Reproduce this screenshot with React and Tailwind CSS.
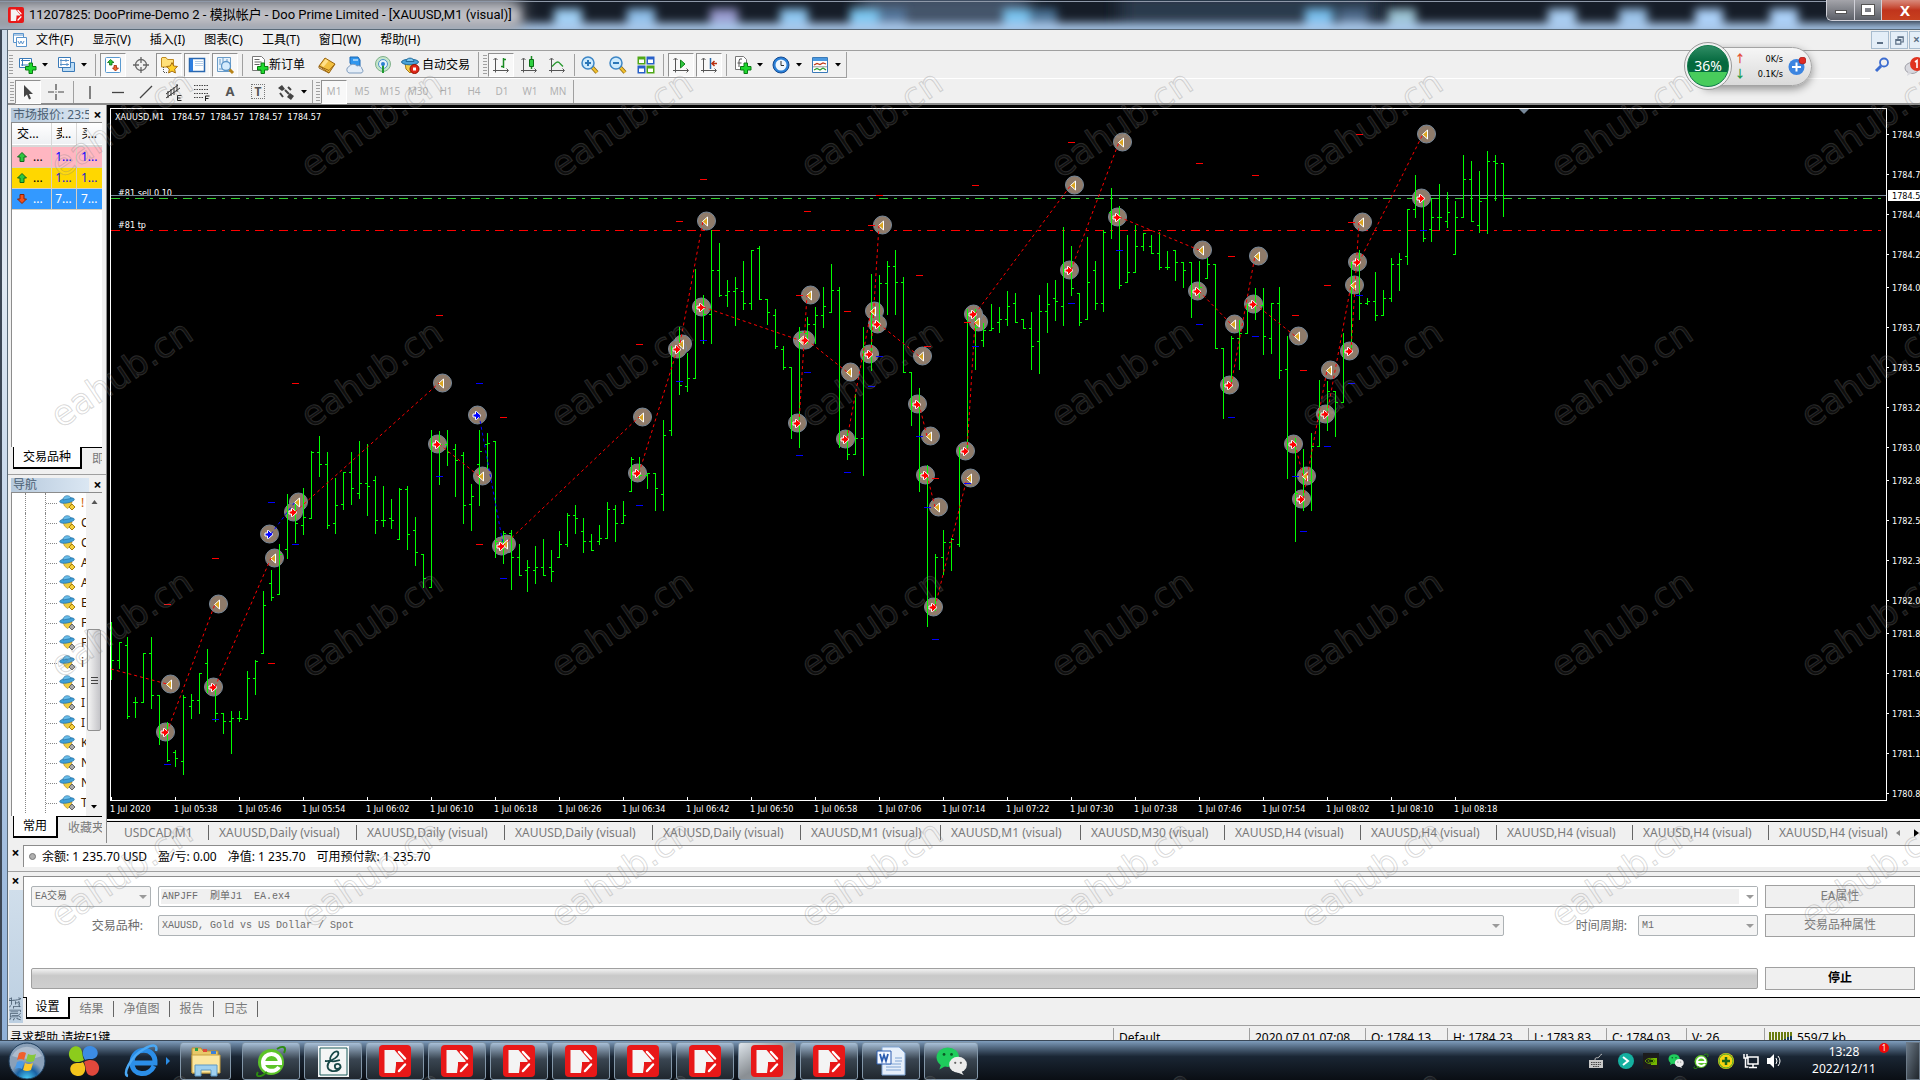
import clsx from "clsx";

/* ---------- chart data: [high, low, open, close] in plot pixels, one bar every 8px ---------- */
const BARS = [
    [622,679,660,660],[642,668,660,642],[637,718,645,716],[697,717,702,702],[653,702,702,653],[637,708,653,695],[695,744,695,733],[722,761,733,760],
    [750,766,752,758],[695,774,761,697],[694,718,706,700],[673,713,700,673],[649,692,663,687],[687,721,687,713],[713,733,713,721],[711,753,721,718],
    [711,721,718,718],[671,718,719,678],[660,694,678,661],[591,653,653,605],[570,600,583,597],[544,594,594,554],[494,558,549,512],[503,542,512,523],
    [488,534,525,517],[451,518,518,452],[436,476,452,464],[452,528,464,525],[478,533,523,505],[472,509,504,472],[452,504,472,488],[441,498,493,483],
    [444,515,483,486],[476,533,480,520],[486,526,520,520],[499,528,518,520],[488,539,539,489],[486,549,489,534],[517,565,530,552],[554,587,554,578],
    [430,587,587,443],[431,484,443,444],[430,465,444,452],[444,496,449,460],[452,523,455,505],[484,530,504,496],[430,505,464,451],[433,468,444,443],
    [441,557,441,541],[531,563,541,533],[530,589,533,557],[544,575,557,575],[560,591,570,567],[546,583,570,567],[539,575,567,575],[550,581,567,571],
    [531,557,557,544],[513,546,544,515],[505,533,515,518],[518,552,531,541],[534,550,541,550],[525,544,541,538],[502,538,538,509],[505,541,509,523],
    [501,523,523,515],[457,491,491,459],[457,478,475,475],[473,488,475,473],[473,510,473,488],[420,510,494,435],[346,435,430,348],[327,394,348,385],
    [353,391,386,378],[269,378,378,307],[295,343,307,314],[230,343,314,270],[243,296,270,295],[280,306,295,291],[277,325,291,288],[261,309,291,303],
    [250,309,303,250],[246,299,248,299],[299,324,299,312],[309,348,315,346],[346,369,349,367],[367,438,367,423],[327,447,423,332],[317,343,333,324],
    [307,343,324,315],[287,327,315,306],[264,312,312,290],[287,447,290,439],[430,459,439,454],[394,454,454,438],[327,475,438,354],[274,370,354,324],
    [275,330,324,283],[261,314,283,266],[250,314,266,282],[277,372,282,372],[372,425,372,404],[388,491,404,473],[465,626,475,607],[554,610,607,557],
    [530,574,557,542],[538,570,542,539],[447,546,544,450],[309,452,451,314],[309,369,314,327],[323,346,340,330],[304,330,330,328],[307,332,322,319],
    [291,325,319,306],[293,322,303,322],[319,328,319,328],[312,369,328,346],[295,373,341,311],[283,332,311,304],[280,320,298,301],[227,325,306,270],
    [246,295,270,288],[293,325,293,322],[237,319,319,282],[261,309,270,303],[230,311,303,232],[188,238,212,217],[206,288,217,285],[235,282,282,272],
    [225,272,272,246],[233,250,246,233],[235,253,246,253],[232,269,253,267],[251,269,267,267],[250,280,250,262],[262,287,262,270],[262,317,262,290],
    [261,297,291,287],[258,278,278,264],[264,348,264,348],[348,418,348,385],[336,387,385,338],[320,369,338,333],[304,333,333,304],[288,319,304,305],
    [288,354,305,336],[303,353,338,303],[287,378,303,370],[336,478,369,443],[438,541,443,493],[449,510,498,478],[433,510,480,446],[380,446,446,413],
    [381,430,413,391],[391,436,391,402],[333,402,402,350],[262,351,350,262],[250,319,262,303],[298,304,303,301],[272,320,301,315],[290,315,315,298],
    [258,301,298,264],[253,290,264,259],[209,264,256,209],[175,217,209,197],[198,241,198,238],[198,241,229,217],[184,229,217,217],[192,227,221,212],
    [201,254,254,217],[155,217,217,179],[161,221,179,221],[171,232,225,201],[151,233,198,161],[155,200,161,163],[163,216,163,195],
];

const SELLS = [
    [165,732],[213,687],[293,512],[437,444],[501,546],[637,473],[677,349],[701,307],[805,340],[797,423],[845,439],[869,354],[877,324],[917,404],
    [925,475],[933,607],[965,451],[973,314],[1069,270],[1117,217],[1197,291],[1253,304],[1229,385],[1293,444],[1301,499],[1325,414],[1349,351],
    [1357,262],[1421,198],
];
const BUYS = [[269,534],[477,415]];
const EXITS = [
    [170,684],[218,604],[274,558],[298,502],[442,383],[482,476],[506,544],[642,417],[682,344],[706,221],[810,295],[802,340],[850,372],[874,311],
    [882,225],[922,356],[930,436],[938,507],[970,478],[978,322],[1074,185],[1122,142],[1202,250],[1258,256],[1234,324],[1298,336],[1306,476],
    [1330,370],[1354,285],[1362,222],[1426,134],
];
const SELL_LINES = [
    [111,669,167,684],[167,732,215,604],[215,687,271,558],[295,512,439,383],[439,444,479,476],[503,546,639,417],[639,473,679,344],
    [679,349,703,221],[703,307,799,340],[799,423,807,295],[807,340,847,372],[847,439,871,311],[871,354,879,225],[879,324,919,356],[919,404,927,436],
    [927,475,935,507],[935,607,967,478],[967,451,975,322],[975,314,1071,185],[1071,270,1119,142],[1119,217,1199,250],[1199,291,1231,324],
    [1231,385,1255,256],[1255,304,1295,336],[1295,444,1303,476],[1303,499,1327,370],[1327,414,1351,285],[1351,351,1359,222],[1359,262,1423,134],
];
const BUY_LINES = [[271,534,295,502],[479,415,503,544]];
const STOPS = [
    [215,558],[167,604],[271,663],[295,383],[439,315],[503,417],[479,544],[639,344],[679,221],[703,179],[799,295],[807,211],[847,311],[871,225],
    [879,195],[919,275],[927,346],[935,478],[967,322],[975,185],[1071,142],[1199,163],[1255,175],[1231,256],[1295,315],[1303,370],[1327,285],
    [1351,222],[1359,134],
];
const TAKES = [
    [167,764],[215,719],[271,502],[295,544],[479,383],[439,476],[503,578],[639,505],[679,381],[703,340],[799,455],[807,372],[847,472],[871,386],
    [879,356],[919,436],[927,507],[935,639],[967,483],[975,346],[1071,303],[1119,250],[1199,324],[1255,336],[1231,417],[1295,476],[1303,531],
    [1327,446],[1351,383],[1359,295],[1423,230],
];
const PRICES = [
    [134,"1784.9"],[174,"1784.7"],[214,"1784.4"],[254,"1784.2"],[287,"1784.0"],[327,"1783.7"],[367,"1783.5"],[407,"1783.2"],[447,"1783.0"],
    [480,"1782.8"],[520,"1782.5"],[560,"1782.3"],[600,"1782.0"],[633,"1781.8"],[673,"1781.6"],[713,"1781.3"],[753,"1781.1"],[793,"1780.8"],
];
const TIMES = [
    "2020","05:38","05:46","05:54","06:02","06:10","06:18","06:26","06:34","06:42","06:50","06:58","07:06","07:14","07:22","07:30","07:38",
    "07:46","07:54","08:02","08:10","08:18",
];

const barPath = BARS.map(([h, l, o, c], i) => {
    const x = 111.5 + i * 8;
    return `M${x} ${h}V${l + 1}M${x - 2.5} ${o + 0.5}H${x}M${x} ${c + 0.5}H${x + 2.5}`;
}).join("");
const linePath = (lines) => lines.map(([a, b, c, d]) => `M${a} ${b}L${c} ${d}`).join("");
const dashPath = (dots) => dots.map(([x, y]) => `M${x - 3} ${y + 0.5}h7`).join("");

const ARROW = "M-4-1.500h2.500v-2.500h1L4 0-.5 4h-1V1.500H-4z";

function Chart() {
    return (
        <div className="flex-1 min-h-0 bg-black flex flex-col pl-[3px] pt-[3px] border-b border-white">
            <div className="flex-1 min-h-0 flex">
                <svg className="flex-1 min-w-0 border border-white block overflow-hidden">
                    <g transform="translate(-111 -109)">
                        <path d="M1519 109h10l-5 5z" fill="#778899" />
                        <g className="font-['DejaVu_Sans_Condensed','Noto_Sans',sans-serif] text-[9px]" fill="#fff">
                            <text x="115" y="120" xmlSpace="preserve">XAUUSD,M1   1784.57  1784.57  1784.57  1784.57</text>
                            <text x="118" y="196">#81 sell 0.10</text>
                            <text x="118" y="228">#81 tp</text>
                        </g>
                        <g shapeRendering="crispEdges">
                            <path d="M111 195.500H3000" stroke="#778899" />
                            <path d="M111 198.500H3000" stroke="#32cd32" strokeDasharray="9 6 3 6" />
                            <path d="M111 230.500H3000" stroke="#f00" strokeDasharray="9 6 3 6" />
                        </g>
                        {[...EXITS, ...BUYS, ...SELLS].map(([x, y], i) => (
                            <circle key={i} cx={x + 0.5} cy={y} r="9" fill="#8f7b6a" stroke="#778899" />
                        ))}
                        <path d={barPath} stroke="#0f0" fill="none" shapeRendering="crispEdges" />
                        {EXITS.map(([x, y], i) => (
                            <path key={i} transform={`translate(${x} ${y + 0.5})`} d="M-3.500 0L1.500-4.500V4.500z" fill="#daa520" stroke="#fff" />
                        ))}
                        {SELLS.map(([x, y], i) => (
                            <path key={i} transform={`translate(${x} ${y + 0.5})`} d={ARROW} fill="#f00" stroke="#fff" />
                        ))}
                        {BUYS.map(([x, y], i) => (
                            <path key={i} transform={`translate(${x} ${y + 0.5})`} d={ARROW} fill="#00f" stroke="#fff" />
                        ))}
                        <path d={linePath(SELL_LINES)} stroke="#f00" strokeDasharray="3 3" />
                        <path d={linePath(BUY_LINES)} stroke="#00f" strokeDasharray="3 3" />
                        <path d={dashPath(STOPS)} stroke="#f00" shapeRendering="crispEdges" />
                        <path d={dashPath(TAKES)} stroke="#00f" shapeRendering="crispEdges" />
                    </g>
                    {TIMES.map((t, i) => (
                        <rect key={t} x={i * 64} y="100%" width="1" height="3" fill="#fff" transform="translate(0 -3)" />
                    ))}
                </svg>
                <svg className="w-[33px] shrink-0 block">
                    <g transform="translate(-1887 -108)" className="font-['DejaVu_Sans_Condensed','Noto_Sans',sans-serif] text-[9px]" fill="#fff">
                        {PRICES.map(([y, label]) => (
                            <g key={y}>
                                <rect x="1887" y={y} width="2" height="1" />
                                <text x="1892" y={y + 4}>{label}</text>
                            </g>
                        ))}
                        <rect x="1888" y="190" width="40" height="11" />
                        <text x="1892" y="199" fill="#000">1784.5</text>
                    </g>
                </svg>
            </div>
            <div className="h-[18px] shrink-0 flex overflow-hidden text-white text-[9px] leading-4 font-['DejaVu_Sans_Condensed','Noto_Sans',sans-serif]">
                {TIMES.map((t) => <span key={t} className="w-16 shrink-0 whitespace-nowrap">1 Jul {t}</span>)}
            </div>
        </div>
    );
}

/* ---------- toolbar ---------- */
function Svg({ children, className = "size-5", box = "0 0 20 20" }) {
    return <svg viewBox={box} className={clsx("shrink-0", className)} fill="none">{children}</svg>;
}
const Grip = () => <div className="w-1 h-5 mx-px shrink-0 bg-[repeating-linear-gradient(180deg,#a0a0a0_0_1px,#f0f0f0_1px_3px)]" />;
const Sep = ({ className = "mx-[2px]" }) => <div className={clsx("w-px h-[22px] shrink-0 bg-[#a0a0a0]", className)} />;
const Caret = () => <svg viewBox="0 0 6 4" className="w-[6px] h-1 shrink-0"><path d="M0 0h6L3 3.500z" fill="#000" /></svg>;
const Plus = () => <path d="M12 8h3.500v3.500H19V15h-3.500v3.500H12V15H8.500v-3.500H12z" fill="#1ed82e" stroke="#0a7a14" />;

function Tool({ label, on, children, className }) {
    return (
        <button aria-label={label} className={clsx("h-6 w-[26px] mr-[2px] shrink-0 flex items-center justify-center border", on ? "bg-[#f8f8f8] border-t-[#909090] border-l-[#909090] border-b-white border-r-white" : "border-transparent", className)}>
            {children}
        </button>
    );
}
function DropTool({ label, children, className = "w-[34px] mr-[5px]" }) {
    return <button aria-label={label} className={clsx("h-6 shrink-0 flex items-center justify-between pl-[3px]", className)}>{children}<Caret /></button>;
}
const Axes = ({ children }) => (
    <Svg>
        <path d="M4.500 3.500v14M2 15.500h15M2.500 5l2-2 2 2M15.500 13.500l2 2-2 2" stroke="#555" />
        {children}
    </Svg>
);
const Lens = ({ plus }) => (
    <Svg>
        <path d="M12 12l5 5.500" stroke="#8a6510" strokeWidth="4" /><path d="M12 12l5 5.500" stroke="#f0c030" strokeWidth="2.500" />
        <circle cx="8" cy="8" r="6" fill="#cdeafd" stroke="#3d86c6" strokeWidth="1.500" />
        <path d={plus ? "M8 5v6M5 8h6" : "M5 8h6"} stroke="#2b76b8" strokeWidth="2" />
    </Svg>
);

function MainToolbar() {
    return (
        <div className="flex h-7 pt-px border-b border-white">
            <div className="flex items-center border-b border-r border-[#a0a0a0]">
                <Grip />
                <DropTool label="新图表"><Svg><path d="M2.500 3.500h12v9h-12z" fill="#fff" stroke="#3a7ab8" /><path d="M4 5.500h9M5.500 4v7M4 10h7" stroke="#3a7ab8" /><Plus /></Svg></DropTool>
                <DropTool label="配置文件" className="w-[34px]"><Svg><path d="M6.500 7.500h12v9h-12z" fill="#bcdcf5" stroke="#3a7ab8" /><path d="M2.500 2.500h12v10h-12z" fill="#fff" stroke="#3a7ab8" /><path d="M4 5.500h9M5 4v7M4 9.500h9M10 4v3M11 8v3" stroke="#5a92c8" /></Svg></DropTool>
                <Sep className="ml-2 mr-1" />
                <Tool label="市场报价" on><Svg><rect x="2.500" y="2.500" width="15" height="15" rx="1" fill="#fff" stroke="#5a9ad0" /><path d="M7.500 4.500L4.500 7.500h2v2.500h2.500V7.500h2z" fill="#2fc43a" stroke="#0c7018" strokeWidth=".8" /><path d="M12.500 16l3-3h-2v-2.500H11V13H9.500z" fill="#f0672c" stroke="#a02808" strokeWidth=".8" /></Svg></Tool>
                <Tool label="数据窗口"><Svg><circle cx="10" cy="10" r="5.500" stroke="#666" strokeWidth="1.300" /><path d="M10 2v6M10 12v6M2 10h6M12 10h6" stroke="#666" strokeWidth="1.300" /></Svg></Tool>
                <Tool label="导航" on><Svg><path d="M2.500 3v9h12V4.500H8.500L7 2.500H3z" fill="#ffe07a" stroke="#c08a20" /><path d="M4.500 12v5.500h4" stroke="#555" strokeDasharray="1 1" /><path d="M13 7.500l1.700 3.500 3.800.5-2.800 2.600.7 3.900-3.400-1.900L9.600 18l.7-3.900-2.800-2.600 3.800-.5z" fill="#ffd028" stroke="#a87010" /></Svg></Tool>
                <Tool label="终端" on><Svg><path d="M2.500 3.500h15v13h-15z" fill="#fff" stroke="#2a68b0" strokeWidth="1.500" /><path d="M3 4h3v12H3z" fill="#2f7fe0" /><path d="M8 6.500h8M8 8.500h8M8 10.500h8" stroke="#b8cfe8" /></Svg></Tool>
                <Tool label="策略测试" on><Svg><path d="M2.500 2.500h13v14h-13z" fill="#e6f2fc" stroke="#6a9cc8" /><path d="M5 4v6M8 3v4M12 4v3M4 14h4" stroke="#6a9cc8" /><path d="M14 14l4 4" stroke="#b88418" strokeWidth="3" /><circle cx="11" cy="11" r="4.500" fill="#cfe9fc" fillOpacity=".8" stroke="#5a94c8" strokeWidth="1.300" /></Svg></Tool>
                <Sep />
                <button className="h-6 w-[69px] flex items-center shrink-0 text-xs whitespace-nowrap pl-1"><Svg><path d="M3.500 1.500h9l3 3v11h-12z" fill="#fff" stroke="#777" /><path d="M5.500 4.500h5M5.500 7h7M5.500 9.500h5" stroke="#666" /><Plus /></Svg>新订单</button>
                <Tool label="MetaEditor"><Svg><path d="M2 11l6-8 10 6-6 9z" fill="#f2c040" stroke="#9a6410" /><path d="M2 11l10 4.500 6-6.500M2 11v2l10 5" stroke="#9a6410" /><path d="M4 10l4.500-6 3 2-5 6z" fill="#ffe08a" /></Svg></Tool>
                <Tool label="市场"><Svg><path d="M5 2h8l2 3v6H7L5 8z" fill="#2f96ee" stroke="#1c68b4" /><path d="M8 5h5" stroke="#fff" /><path d="M4 18a3.500 3.500 0 010-6.500 5 5 0 018-.5 3.500 3.500 0 015 3 2.200 2.200 0 01-1 4z" fill="#e4edf7" stroke="#7f9cbf" /></Svg></Tool>
                <Tool label="信号"><Svg><circle cx="10" cy="9" r="7.500" fill="#c5e6cb" stroke="#7fb08a" /><circle cx="10" cy="9" r="4.500" fill="#e6f2fb" stroke="#4e90c8" /><path d="M10 9v9" stroke="#1f9a30" strokeWidth="2" /><circle cx="10" cy="9" r="2" fill="#2d7fd0" /></Svg></Tool>
                <button className="h-6 w-[75px] mr-[5px] flex items-center gap-[2px] shrink-0 text-xs whitespace-nowrap pl-[2px]"><Svg><path d="M5 8h10l-2 7-3 3-4-4z" fill="#f4cd48" stroke="#a87a18" /><ellipse cx="10" cy="7" rx="8.500" ry="2.800" fill="#4aa2d8" stroke="#1e6a9c" /><path d="M6 6.500C6 2 14 2 14 6.500z" fill="#7cc6ee" stroke="#1e6a9c" /><circle cx="14.500" cy="14" r="4.500" fill="#e02818" stroke="#901000" /><path d="M13 12.500h3v3h-3z" fill="#fff" /></Svg>自动交易</button>
            </div>
            <div className="flex items-center border-b border-r border-[#a0a0a0] pl-[3px]">
                <Grip />
                <Tool label="柱状图" on><Axes><path d="M12.500 3v10M10 11.500h2.500M12.500 4.500H15" stroke="#1a8a22" strokeWidth="1.500" /></Axes></Tool>
                <Tool label="K线图"><Axes><path d="M12.500 1v13" stroke="#1a8a22" strokeWidth="1.500" /><path d="M10.500 4.500h4v7h-4z" fill="#2fd040" stroke="#0c7018" /></Axes></Tool>
                <Tool label="折线图"><Axes><path d="M5 11.500l3-3q3-3 5 0l3 3" stroke="#2a9a30" strokeWidth="1.300" /></Axes></Tool>
                <Sep />
                <Tool label="放大"><Lens plus /></Tool>
                <Tool label="缩小"><Lens /></Tool>
                <Tool label="平铺窗口"><Svg><path d="M1.500 1.500h8v8h-8zM10.500 10.500h8v8h-8z" fill="#50a818" /><path d="M10.500 1.500h8v8h-8zM1.500 10.500h8v8h-8z" fill="#2860c8" /><path d="M3 4.500h5v3.500H3zM12 4.500h5v3.500h-5zM3 13.500h5V17H3zM12 13.500h5V17h-5z" fill="#fff" /></Svg></Tool>
                <Sep className="ml-[2px] mr-1" />
                <Tool label="自动滚动" on><Axes><path d="M9.500 5v8l4.500-4z" fill="#30c840" stroke="#108018" /></Axes></Tool>
                <Tool label="图表平移" on><Axes><path d="M11.500 3v11" stroke="#2a6aa8" strokeWidth="1.500" /><path d="M18 8.500h-5M15.500 6L13 8.500l2.500 2.500" stroke="#b83010" strokeWidth="1.500" /></Axes></Tool>
                <Sep />
                <DropTool label="指标列表"><Svg><path d="M3.500 1.500h8l3 3v10h-11z" fill="#fff" stroke="#777" /><path d="M10 4q-3-1-3 2v6M5.500 8h4" stroke="#555" /><Plus /></Svg></DropTool>
                <DropTool label="时间周期"><Svg><circle cx="10" cy="10" r="8" fill="#2a80d8" stroke="#154a90" /><circle cx="10" cy="10" r="5.500" fill="#eef6fd" /><path d="M10 6v4.500h3" stroke="#333" /></Svg></DropTool>
                <DropTool label="模板"><Svg><path d="M2.500 2.500h15v15h-15z" fill="#fff" stroke="#3a7ab8" /><path d="M3 3h14v3H3z" fill="#4a98e0" /><path d="M4 10l3-1.500 3 1 3-1.500 3 1" stroke="#c03818" strokeWidth="1.300" /><path d="M4 15l3-1.500 3 1.500 3-2 3 2" stroke="#28a030" strokeWidth="1.300" /><path d="M3 11.800h14" stroke="#999" /></Svg></DropTool>
            </div>
        </div>
    );
}

function LineToolbar() {
    return (
        <div className="flex h-[26px] pt-px border-b-2 border-[#8c8c8c]">
            <div className="flex items-center border-r border-[#a0a0a0] pl-px">
                <Grip />
                <Tool label="光标" on><Svg><path d="M6 3v12l3-2.500 2 5 2-1-2-4.500h4z" fill="#444" /></Svg></Tool>
                <Tool label="十字准线"><Svg><path d="M10 2v6M10 12v6M2 10h6M12 10h6M10 9.500v1" stroke="#444" strokeWidth="1.200" /></Svg></Tool>
                <Sep className="ml-[2px] mr-[3px]" />
                <Tool label="垂直线"><Svg><path d="M10 4v13" stroke="#444" strokeWidth="1.300" /></Svg></Tool>
                <Tool label="水平线"><Svg><path d="M4 10.500h12" stroke="#444" strokeWidth="1.300" /></Svg></Tool>
                <Tool label="趋势线"><Svg><path d="M4 16L16 4" stroke="#444" strokeWidth="1.300" /></Svg></Tool>
                <Tool label="通道"><Svg><path d="M2 12L14 3M2 16L16 6M4 9v7M7 7v7M10 5v8M13 2v8" stroke="#333" /><path d="M17.500 13.500h-4v5h4M13.500 16h3" stroke="#222" /></Svg></Tool>
                <Tool label="斐波纳契"><Svg><path d="M2 3.500h15M2 7.500h15M2 11.500h15M2 15.500h9" stroke="#444" strokeDasharray="1.500 1" /><path d="M13.500 19v-5h4M13.500 16.500h3" stroke="#222" /></Svg></Tool>
                <Tool label="文字" className="text-[13px] font-bold text-[#555]">A</Tool>
                <Tool label="文字标签" className="text-xs font-bold text-[#555]"><span className="border border-dotted border-[#777] px-[3px] leading-[13px]">T</span></Tool>
                <DropTool label="箭头"><Svg><path d="M6 3l3 4-3 2-4-3zM14 11l4 3-3 4-4-3z" fill="#444" /><path d="M9 8l4 4M12 5l3 3M4 11l3 4" stroke="#444" strokeWidth="2" /></Svg></DropTool>
            </div>
            <div className="flex items-center border-r border-[#a0a0a0] pl-[2px]">
                <Grip />
                {["M1", "M5", "M15", "M30", "H1", "H4", "D1", "W1", "MN"].map((p, i) => (
                    <Tool key={p} on={i === 0} className="text-[10px] text-[#b0b0b0]">{p}</Tool>
                ))}
            </div>
        </div>
    );
}

/* ---------- left column ---------- */
function PanelHead({ children }) {
    return (
        <div className="h-[15px] flex shrink-0 ml-[3px] mt-[2px] items-center justify-between text-xs leading-[14px] text-[#4b5f73]">
            <h2 className="w-[78px] h-[14px] overflow-hidden whitespace-nowrap bg-linear-to-r from-[#b6c9dc] to-[#dbe7f3] pl-[2px] leading-[13px]">{children}</h2>
            <button aria-label="关闭" className="w-[17px] text-black font-bold text-sm leading-3">×</button>
        </div>
    );
}
const QuoteArrow = ({ down }) => (
    <Svg className={clsx("size-[10px]", down && "rotate-180")} box="0 0 10 10"><path d="M5 .5L.5 5H3v4.500h4V5h2.500z" fill={down ? "#f2511c" : "#2fc640"} stroke={down ? "#8a2000" : "#0c6818"} /></Svg>
);
const BottomTabs = ({ tabs, wide }) => (
    <div className="flex h-[27px] shrink-0 ml-[3px] mr-[4px] text-xs whitespace-nowrap overflow-hidden">
        <button className={clsx("h-[22px] shrink-0 ml-[2px] bg-white border-l border-r-2 border-b-2 border-black text-center leading-5", wide ? "w-[69px]" : "w-[45px]")}>{tabs[0]}</button>
        <button className="flex-1 text-left text-[#7a7a7a] border-t border-black h-[22px] leading-5 pl-[10px]">{tabs[1]}</button>
    </div>
);
/* column captions are narrower than their first character */
const Narrow = ({ children }) => <span className="inline-flex items-end"><span className="w-[6px] overflow-hidden">{children}</span>...</span>;

function MarketWatch() {
    const rows = [
        ["bg-[#ffb6c1] text-[#0000ff]", "1...", false],
        ["bg-[#ffd700] text-[#1a1ad0]", "1...", false],
        ["bg-[#3399ff] text-white", "7...", true],
    ];
    return (
        <section className="h-[370px] flex flex-col shrink-0 border-b border-[#a0a0a0]">
            <PanelHead>市场报价: 23:5</PanelHead>
            <div className="flex-1 bg-white border-t border-l border-[#8c8c8c] ml-[3px] mr-[4px] overflow-hidden">
                <table className="w-full table-fixed border-collapse text-xs leading-[18px]">
                    <thead>
                        <tr className="h-[23px] bg-linear-to-b from-white to-[#eef0f3] border-b-2 border-[#d8d8d8]">
                            <th className="w-[39px] font-normal text-left pl-[5px]">交...</th>
                            <th className="w-[25px] font-normal border-l border-[#d8d8d8]"><Narrow>卖</Narrow></th>
                            <th className="font-normal border-l border-[#d8d8d8]"><Narrow>买</Narrow></th>
                        </tr>
                    </thead>
                    <tbody>
                        {rows.map(([cls, v, down], i) => (
                            <tr key={i} className={clsx("h-[21px] border-b border-[#d8d0c0]", cls)}>
                                <td className="pl-[5px]"><span className="flex items-center gap-[6px]"><QuoteArrow down={down} /><span className={down ? "text-white" : "text-black"}>...</span></span></td>
                                <td className="border-l border-[#d8d0c0] text-center">{v}</td>
                                <td className="border-l border-[#d8d0c0] text-center">{v}</td>
                            </tr>
                        ))}
                    </tbody>
                </table>
            </div>
            <BottomTabs tabs={["交易品种", "即时"]} wide />
        </section>
    );
}

const NAV = ["!y", "Cy", "Cy", "Ay", "Ay", "Ey", "F", "F", "i", "I", "I", "Iy", "K", "N", "N", "T"];
function Navigator() {
    return (
        <section className="flex-1 min-h-0 flex flex-col">
            <PanelHead>导航</PanelHead>
            <div className="flex-1 min-h-0 flex bg-white border-t border-l border-[#8c8c8c] ml-[3px] mr-[4px] overflow-hidden">
                <ul className="flex-1 min-w-0 overflow-hidden text-xs leading-5">
                    {NAV.map((n, i) => (
                        <li key={i} className="h-5 flex items-center pl-[13px]">
                            <i className="w-[21px] h-5 shrink-0 border-x border-dotted border-[#888]" />
                            <i className="w-[11px] shrink-0 border-t border-dotted border-[#888]" />
                            <Svg className="w-[17px] h-4 ml-[2px]" box="0 0 17 16">
                                <path d="M4 7h9l-1.500 4-3 2.500-3-2.500z" fill="#f0cc40" stroke="#b89020" strokeWidth=".7" />
                                <ellipse cx="8" cy="5.500" rx="7.500" ry="2.500" transform="rotate(-10 8 5.500)" fill="#3f9fd8" stroke="#236c9c" strokeWidth=".6" />
                                <path d="M4 5C4-.5 11.500-.5 12 3.500z" fill="#68bdea" stroke="#236c9c" strokeWidth=".6" />
                                <path d="M13 9l3 3-3 3-3-3z" fill={n[1] ? "#f4ce3c" : "#a8a8a8"} stroke={n[1] ? "#a88010" : "#666"} />
                            </Svg>
                            <span className={clsx("ml-[5px]", i === 0 ? "text-[#d06000]" : "text-[#402000]")}>{n[0]}</span>
                        </li>
                    ))}
                </ul>
                <div className="w-4 shrink-0 bg-[#f0f0f0] flex flex-col items-center py-[7px]">
                    <svg viewBox="0 0 6 4" className="w-[7px] h-1 shrink-0"><path d="M0 4h6L3 0z" fill="#555" /></svg>
                    <div className="h-[102px] w-[14px] shrink-0 mt-[125px] mb-auto rounded-[2px] border border-[#909090] bg-linear-to-r from-[#f4f4f4] to-[#c4c4c8] flex flex-col items-center justify-center gap-[2px]">
                        <i className="w-[7px] h-px bg-[#444]" /><i className="w-[7px] h-px bg-[#444]" /><i className="w-[7px] h-px bg-[#444]" />
                    </div>
                    <Caret />
                </div>
            </div>
            <BottomTabs tabs={["常用", "收藏夹"]} />
        </section>
    );
}

/* ---------- title / menu ---------- */
const GLOWS = [[568, "#9fd0f5"], [641, "#8fc0ea"], [724, "#9a9bd0"], [794, "#8ec8f2"], [864, "#7cc8f2"], [892, "#54779c"], [1017, "#78c4f0"], [1043, "#4c7498"], [1319, "#78c0ee"], [1353, "#506c8c"], [1402, "#9cc4d4"], [1562, "#a8cdf2"], [1633, "#9cc4ea"], [1709, "#acd2fa"], [1784, "#acd2fa"]];
const Logo = ({ className }) => (
    <Svg className={className} box="0 0 32 32">
        <rect width="32" height="32" rx="4" fill="#e81818" />
        <path d="M5.500 5h10l9 10.500V17H17v3l-1 8H5.500z" fill="#f4f4f4" />
        <path d="M20 7l6 6.500M26 19.500L20 26" stroke="#fff" strokeWidth="2.500" strokeLinecap="round" />
    </Svg>
);

function TitleBar() {
    return (
        <header className="relative h-[30px] shrink-0 overflow-hidden border-b border-[#5a6a78] bg-[#161d28]">
            <svg className="absolute inset-0 w-full h-full">
                <defs>
                    <filter id="soft" x="-20%" y="-60%" width="140%" height="220%"><feGaussianBlur stdDeviation="5" /></filter>
                    <filter id="wide" x="-20%" y="-60%" width="140%" height="220%"><feGaussianBlur stdDeviation="9" /></filter>
                </defs>
                <rect x="860" y="-10" width="170" height="40" fill="#44546a" filter="url(#wide)" />
                <rect x="1120" y="-10" width="260" height="40" fill="#2c3a4e" filter="url(#wide)" />
                <g filter="url(#soft)">
                    {GLOWS.map(([x, c]) => <rect key={x} x={x - 14} y="9" width="28" height="26" fill={c} />)}
                    <rect x="-20" y="23" width="3000" height="14" fill="#a9c8ea" />
                </g>
                <rect x="-20" y="-4" width="540" height="38" fill="#a3a5ac" filter="url(#wide)" />
                <rect x="20" y="8" width="500" height="16" fill="#c0c0c6" filter="url(#soft)" />
                <rect width="100%" height="1" y="1" fill="#8e98a8" />
            </svg>
            <div className="relative h-full flex items-center pl-2">
                <Logo className="size-4" />
                <h1 className="ml-[5px] font-['Roboto','Noto_Sans_CJK_SC',sans-serif] text-[13px] text-black whitespace-nowrap">11207825: DooPrime-Demo 2 - 模拟帐户 - Doo Prime Limited - [XAUUSD,M1 (visual)]</h1>
                <div className="ml-auto h-[21px] self-start flex rounded-bl-md border-l border-b border-[#d0d0d8] overflow-hidden">
                    <button aria-label="最小化" className="w-7 flex items-center justify-center bg-linear-to-b from-[#a4a4aa] to-[#5c6068] border-r border-[#d0d0d8]"><i className="w-3 h-1 mt-1 bg-white border border-[#555]" /></button>
                    <button aria-label="还原" className="w-[27px] flex items-center justify-center bg-linear-to-b from-[#a4a4aa] to-[#5c6068] border-r border-[#d0d0d8]"><i className="w-3 h-[10px] border-[3px] border-white outline outline-[#555]" /></button>
                    <button aria-label="关闭" className="w-[38px] pl-2 text-[15px] leading-none font-bold text-white bg-linear-to-b from-[#d88a7c] via-[#c0341c] to-[#c8401f]">X</button>
                </div>
            </div>
        </header>
    );
}

function MenuBar() {
    return (
        <nav className="flex h-[21px] shrink-0 items-center border-b border-[#a0a0a0] text-xs leading-5">
            <Svg className="size-[14px] ml-[5px] mr-[9px]" box="0 0 14 14"><path d="M.5.500h10v9H.5z" fill="#fff" stroke="#5a94cc" /><path d="M3.500 4.500h10v9h-10z" fill="#fff" stroke="#5a94cc" /><path d="M5 8l1.500 3L8 8l1.500 3L11 8" stroke="#5a94cc" /><path d="M.5 2h10" stroke="#5a94cc" /></Svg>
            {["文件(F)", "显示(V)", "插入(I)", "图表(C)", "工具(T)", "窗口(W)", "帮助(H)"].map((m) => (
                <button key={m} className="mr-[19px] whitespace-nowrap">{m}</button>
            ))}
            <div className="ml-auto flex h-[18px] gap-px text-[#5d7086]">
                <button aria-label="最小化窗口" className="w-[18px] border border-[#a8bccf] bg-[#e4eef8] flex items-end justify-center pb-1"><i className="w-[6px] h-[2px] bg-[#5d7086]" /></button>
                <button aria-label="还原窗口" className="w-[18px] border border-[#a8bccf] bg-[#e4eef8] flex items-center justify-center"><Svg className="size-[9px]" box="0 0 9 9"><path d="M3 3V.8h5.200V6H6M.8 3.500h5v4.700h-5zM.8 4.500h5M3 1.500h5" stroke="#5d7086" strokeWidth="1.200" /></Svg></button>
                <button aria-label="关闭窗口" className="w-[11px] border border-r-0 border-[#a8bccf] bg-[#e4eef8] text-xs leading-4 font-bold overflow-hidden pl-[3px]">×</button>
            </div>
        </nav>
    );
}

function SpeedBall() {
    return (
        <aside className="absolute top-[42px] right-[108px] h-[48px] w-[128px] flex items-center">
            <div className="absolute left-5 right-0 top-[5px] h-[39px] rounded-r-full border border-[#a4a4a4] bg-linear-to-b from-[#f6f6f6] to-[#dadada] shadow-[0_3px_8px_rgba(0,0,0,0.4)]" />
            <div className="relative size-12 shrink-0 rounded-full border border-[#999] bg-[#f0f0f0] p-[2px]">
                <div className="size-full rounded-full border border-[#0c7848] bg-[linear-gradient(180deg,#2f8c64_0,#04693e_40%,#04693e_64%,#48cc5c_64%)] flex items-center justify-center text-white text-sm">36%</div>
            </div>
            <div className="relative flex-1 flex items-center text-[10px] leading-[15px] text-black">
                <div className="w-4 text-center font-bold text-[11px]"><p className="text-[#e4533a]">↑</p><p className="text-[#1f9c4c]">↓</p></div>
                <div className="w-[35px] text-right font-['DejaVu_Sans_Condensed',sans-serif] text-[9px] whitespace-nowrap pt-[2px]"><p>0K/s</p><p>0.1K/s</p></div>
                <Svg className="size-[18px] ml-[5px]" box="0 0 18 18"><circle cx="8.500" cy="10" r="8" fill="#3b84e0" /><path d="M8.500 5.500v9M4 10h9" stroke="#fff" strokeWidth="2" /><circle cx="14.500" cy="3.500" r="3.500" fill="#e02c24" stroke="#901818" strokeWidth=".6" /></Svg>
            </div>
        </aside>
    );
}

/* ---------- bottom panels ---------- */
const CHART_TABS = [
    ["USDCAD,M1", "w-[102px] pl-[17px]"],
    ...Array(4).fill(["XAUUSD,Daily (visual)", "w-[148px] pl-[10px]"]),
    ...Array(2).fill(["XAUUSD,M1 (visual)", "w-[140px] pl-[10px]"]),
    ["XAUUSD,M30 (visual)", "w-[144px] pl-[10px]"],
    ...Array(4).fill(["XAUUSD,H4 (visual)", "w-[136px] pl-[10px]"]),
];
function ChartTabs() {
    return (
        <div className="h-[22px] shrink-0 mt-px border-t border-black flex items-center text-xs text-[#7a7a7a] overflow-hidden">
            {CHART_TABS.map(([t, cls], i) => (
                <button key={i} className={clsx("shrink-0 text-left whitespace-nowrap border-r border-[#666] leading-[15px]", cls)}>{t}</button>
            ))}
            <button className="flex-1 min-w-0 text-left whitespace-nowrap overflow-hidden pl-[10px]">XAUUSD,H4 (visual)</button>
            <button aria-label="向左" className="w-4 shrink-0 flex justify-center"><svg viewBox="0 0 4 6" className="w-1 h-[6px]"><path d="M4 0v6L0 3z" fill="#888" /></svg></button>
            <button aria-label="向右" className="w-[14px] shrink-0 flex justify-end pr-[1px]"><svg viewBox="0 0 4 6" className="w-[5px] h-2"><path d="M0 0v6l4-3z" fill="#000" /></svg></button>
        </div>
    );
}

function Drop({ label, value, className, white }) {
    return (
        <div className={clsx("relative h-[21px]", className)}>
            <select aria-label={label} className={clsx("block appearance-none w-full h-full rounded-[2px] border border-[#adb2b5] px-[3px] font-['Liberation_Mono','Noto_Sans_CJK_SC',monospace] text-[10px] leading-[18px] text-[#6d6d6d] whitespace-pre", white ? "bg-[#f0f0f0] ring-2 ring-inset ring-white" : "bg-[#f4f4f4]")}>
                <option>{value}</option>
            </select>
            {white && <i className="absolute right-px top-px bottom-px w-[18px] bg-white pointer-events-none" />}
            <svg viewBox="0 0 8 4" className="absolute right-1 top-[9px] w-2 h-1 pointer-events-none"><path d="M0 0h8L4 4z" fill="#9a9a9a" /></svg>
        </div>
    );
}
const Btn = ({ children, className }) => (
    <button className={clsx("w-[150px] h-[23px] shrink-0 border border-[#a0a0a0] bg-[#f0f0f0] text-xs font-['Liberation_Mono','Noto_Sans_CJK_SC',monospace]", className)}>{children}</button>
);

function Tester() {
    return (
        <section className="flex shrink-0 border-t border-[#a0a0a0]">
            <div className="w-[15px] shrink-0 flex flex-col items-center pt-[3px]">
                <button aria-label="关闭测试" className="font-bold text-sm leading-3">×</button>
                <div className="flex-1 mt-[3px] mb-[2px] w-[14px] bg-linear-to-b from-[#d0deeb] to-[#bccfe1] flex items-end">
                    <h2 className="[writing-mode:vertical-rl] [text-orientation:sideways] rotate-180 text-xs leading-[14px] text-[#4b5f73] pt-[2px]">测试</h2>
                </div>
            </div>
            <div className="flex-1 min-w-0 mt-1">
                <div className="bg-white border-t border-l border-[#8c8c8c] pl-[7px] pr-[5px] pt-2 pb-[7px]">
                    <div className="flex items-center gap-[7px] h-[23px]">
                        <Drop label="类型" value="EA交易" className="w-[120px] shrink-0" />
                        <Drop label="智能交易" value={"ANPJFF\u00a0\u00a0刷单J1\u00a0\u00a0EA.ex4"} className="flex-1" white />
                        <Btn className="text-[#7a7a7a]">EA属性</Btn>
                    </div>
                    <div className="flex items-center gap-[7px] h-[23px] mt-[6px] text-xs text-[#6d6d6d]">
                        <span className="w-[120px] shrink-0 text-right pr-2">交易品种:</span>
                        <Drop label="交易品种" value="XAUUSD, Gold vs US Dollar / Spot" className="flex-1" />
                        <span className="w-[120px] shrink-0 text-right pr-1">时间周期:</span>
                        <Drop label="时间周期" value="M1" className="w-[120px] shrink-0" />
                        <Btn className="text-[#7a7a7a]">交易品种属性</Btn>
                    </div>
                    <div className="flex items-center gap-[7px] h-[23px] mt-[30px]">
                        <div role="progressbar" aria-label="测试进度" className="flex-1 h-[21px] rounded-[2px] border border-[#a0a0a0] bg-linear-to-b from-[#f2f2f2] via-[#c9c9c9] via-35% to-[#cfcfcf]" />
                        <Btn className="font-bold text-black">停止</Btn>
                    </div>
                </div>
                <div className="flex h-7 border-t border-black text-xs text-[#7a7a7a]">
                    <button className="w-[44px] h-[22px] ml-[3px] -mt-px bg-white border-l border-r-2 border-b-2 border-black text-black leading-5">设置</button>
                    {[["结果", "w-[44px]"], ["净值图", "w-[56px]"], ["报告", "w-[44px]"], ["日志", "w-[44px]"]].map(([t, w]) => (
                        <button key={t} className={clsx("h-4 mt-[3px] border-r border-[#666] leading-4", w)}>{t}</button>
                    ))}
                </div>
            </div>
        </section>
    );
}

function StatusBar() {
    const cells = [["Default", "w-[136px]"], ["2020.07.01 07:08", "w-[116px]"], ["O: 1784.13", "w-[82px]"], ["H: 1784.23", "w-[81px]"], ["L: 1783.83", "w-[78px]"], ["C: 1784.03", "w-[80px]"], ["V: 26", "w-[78px]"]];
    return (
        <footer className="h-[15px] shrink-0 overflow-hidden border-t border-[#a0a0a0] flex text-xs leading-6 whitespace-nowrap">
            <span className="flex-1 pl-[2px]">寻求帮助,请按F1键</span>
            {cells.map(([t, w]) => <span key={t} className={clsx("shrink-0 border-l border-[#a0a0a0] h-6 mt-[2px] pl-[5px] leading-5", w)}>{t}</span>)}
            <span className="w-[156px] shrink-0 border-l border-[#a0a0a0] h-6 mt-[2px] pl-1 flex leading-5">
                <Svg className="w-6 h-3 mt-1 mr-1" box="0 0 24 12"><path d="M1 0v12M4 0v12M7 0v12M10 0v10M13 0v9M16 0v7M19 0v5M22 0v4" stroke="#6a7c10" strokeWidth="2" /><path d="M10 10v2M13 9v3M16 7v5M19 5v7M22 4v8" stroke="#123c60" strokeWidth="2" /></Svg>
                559/7 kb
            </span>
        </footer>
    );
}

/* ---------- taskbar ---------- */
const GreenE = ({ className }) => (
    <Svg className={className} box="0 0 32 32"><circle cx="16" cy="17" r="13" fill="#5cc428" /><path d="M8 18h17c0-12-17-12-17 0 0 9 12 10 16 4" stroke="#fff" strokeWidth="4" /><path d="M3 27C0 31 4 34 12 27M22 4c6-4 10-2 7 4" stroke="#2c8c10" strokeWidth="2" /></Svg>
);
const WeChat = ({ className }) => (
    <Svg className={className} box="0 0 34 30"><ellipse cx="13" cy="11" rx="12" ry="10.500" fill="#1fcc5c" /><path d="M6 18l-2 6 7-4z" fill="#1fcc5c" /><circle cx="9" cy="8" r="1.500" fill="#0a5a24" /><circle cx="17" cy="8" r="1.500" fill="#0a5a24" /><ellipse cx="24" cy="19" rx="9.500" ry="8.500" fill="#ececec" /><path d="M27 25l3 5-7-3z" fill="#ececec" /><circle cx="21" cy="17" r="1.200" fill="#666" /><circle cx="27" cy="17" r="1.200" fill="#666" /></Svg>
);
function Task({ label, active, className = "w-[58px]", children }) {
    return (
        <button aria-label={label} className={clsx("h-[38px] shrink-0 mr-1 flex items-center justify-center rounded-[3px] border border-[#8296a8]", active ? "bg-linear-to-br from-[#dfe6ec] via-[#8a8f94] to-[#9a9da0]" : "bg-linear-to-b from-[#a8c0d8] via-[#3a4652] via-45% to-[#20272e]", className)}>{children}</button>
    );
}

function Taskbar() {
    return (
        <nav className="h-10 shrink-0 flex items-start pt-px relative bg-linear-to-b from-[#7f9dbd] via-[#1a2634] via-40% to-[#0a0e14] border-t border-[#3a4858]">
            <button aria-label="开始" className="w-[54px] h-[38px] flex items-center justify-center">
                <Svg className="size-[38px]" box="0 0 38 38">
                    <defs><radialGradient id="orb" cy="1"><stop stopColor="#4ad0f8" /><stop offset=".6" stopColor="#1a62a4" /><stop offset="1" stopColor="#8aa0b8" /></radialGradient></defs>
                    <circle cx="19" cy="19" r="18" fill="url(#orb)" stroke="#1c3c5c" />
                    <path d="M4 14a16 14 0 0130 0q-14 6-30 0z" fill="#fff" fillOpacity=".3" />
                    <path d="M11 11q4-2 7 0l-2 7q-3-2-7 0z" fill="#f0602c" /><path d="M20 12q4 2 8 0l-2 7q-4 2-8 0z" fill="#86c83c" />
                    <path d="M9 20q4-2 7 0l-2 7q-3-2-7 0z" fill="#4c9ce8" /><path d="M17 21q4 2 8 0l-2 7q-4 2-8 0z" fill="#fcc82c" />
                </Svg>
            </button>
            <button aria-label="浏览器" className="w-[60px] h-[38px] flex items-center justify-center">
                <Svg className="size-8" box="0 0 32 32"><path d="M16 15C8 20 0 15 1 8 2 1 10-1 13 4c2 4 1 7 3 11z" fill="#8ccc1c" /><path d="M17 15C12 7 16 0 23 1s9 9 4 12c-3 2-7 0-10 2z" fill="#3c8ce4" /><path d="M16 17c8-5 16 0 15 7-1 7-9 9-12 4-2-4-1-7-3-11z" fill="#e0483c" /><path d="M15 17c5 8 1 15-6 14s-9-9-4-12c3-2 7 0 10-2z" fill="#f4c41c" /></Svg>
            </button>
            <button aria-label="Internet Explorer" className="w-[65px] h-[38px] flex items-center justify-center gap-[6px]">
                <Svg className="size-9" box="0 0 36 36"><path d="M9 20h22c1-17-23-17-23 0 0 13 17 14 22 3" stroke="#2b8ee8" strokeWidth="5" /><path d="M4 33C-2 32 6 14 20 6c8-5 14-5 12 2" stroke="#4aa8f4" strokeWidth="2.500" /></Svg>
                <svg viewBox="0 0 5 10" className="w-1 h-2"><path d="M0 0l5 5-5 5z" fill="#2b8ee8" /></svg>
            </button>
            <Task label="资源管理器" className="w-[51px] ml-px mr-[11px]">
                <Svg className="size-8" box="0 0 32 32"><path d="M2 3h9l2 3h15v22H2z" fill="#e8c868" stroke="#b89030" /><path d="M2 10h28v18H2z" fill="#fbe6a0" stroke="#c8a040" /><path d="M5 3h3v3H5z" fill="#28a048" /><path d="M13 4h4v3h-4z" fill="#e04838" /><path d="M21 6h5v3h-5z" fill="#3c80d8" /><path d="M5 31V20h22v11h-6v-6H11v6z" fill="#9ed0f0" stroke="#5c98c4" /></Svg>
            </Task>
            <Task label="360浏览器"><GreenE className="size-8" /></Task>
            <Task label="编辑器"><Svg className="size-[31px]" box="0 0 31 31"><path d="M0 0h31v31H0z" fill="#f4f6f6" /><path d="M2 2h27v27H2z" stroke="#1c5c5c" /><path d="M7 15c7 1 15-5 13-9-3-3-10 6-7 9 2 1 5 0 9-1M12 15c-4 4-3 9 2 10 6 1 10-3 8-6-2-2-6-1-5 2 0 2 3 3 6 0" stroke="#184848" strokeWidth="1.800" /></Svg></Task>
            {Array.from({ length: 8 }, (_, i) => (
                <Task key={i} label="DooPrime" active={i === 6}><Logo className="size-8" /></Task>
            ))}
            <Task label="Word"><Svg className="size-[30px]" box="0 0 30 30"><path d="M6 1h17l6 6v22H6z" fill="#e6effa" stroke="#7ea4d4" /><path d="M10 18h15M10 21h15M10 24h15M19 12h7M19 15h7" stroke="#7ea4d4" /><path d="M1 5h14v13H1z" fill="#f4f8ff" stroke="#2b5cb0" /><path d="M4 8l2 7 2-6 2 6 2-7" stroke="#2b5cb0" strokeWidth="1.800" /></Svg></Task>
            <Task label="微信" className="w-[54px]"><WeChat className="w-[33px] h-7" /></Task>
            <div className="ml-auto h-[38px] flex items-center gap-[9px]">
                <Svg className="size-4" box="0 0 16 16"><path d="M1 7h14v8H1z" fill="#c8c8c8" /><path d="M3 9.500h10M3 11.500h10M5 13.500h6" stroke="#444" strokeDasharray="1.500 .8" /><path d="M7 7c0-4 3-1 4-3s2-2 3-3" stroke="#c8c8c8" /></Svg>
                <Svg className="size-4 ml-[5px]" box="0 0 16 16"><circle cx="8" cy="8" r="8" fill="#14b0a0" /><path d="M5 4l5 4-5 4" stroke="#fff" strokeWidth="2" /></Svg>
                <Svg className="size-4" box="0 0 16 16"><path d="M0 0h16v16H0z" fill="#1c1c1c" /><path d="M8 5h6v7H8z" fill="#76b900" /><path d="M2 8c3-4 8-3 10 0-2 3-7 4-10 0zM5 8c1-2 4-2 5 0-1 2-4 2-5 0z" stroke="#5c9000" /><path d="M7 8h3" stroke="#143800" strokeWidth="2" /></Svg>
                <WeChat className="size-4" />
                <GreenE className="size-4" />
                <Svg className="size-4" box="0 0 16 16"><circle cx="8" cy="8" r="8" fill="#f8d410" /><circle cx="8" cy="8" r="7" stroke="#3ca830" /><path d="M8 4v8M4 8h8" stroke="#1c6818" strokeWidth="2.500" /></Svg>
                <Svg className="size-4" box="0 0 16 16"><path d="M5 4h10v7H5zM10 11v3M6 14.500h8M1 1v4h3V1M2.500 5v9h3" stroke="#fff" strokeWidth="1.500" /></Svg>
                <Svg className="size-4 -ml-[2px]" box="0 0 16 16"><path d="M1 5h3l4-4v14l-4-4H1z" fill="#fff" /><path d="M10 5q2 3 0 6M12 3q4 5 0 10" stroke="#fff" /></Svg>
                <div className="w-[106px] relative text-white text-xs leading-[17px] text-center pb-[2px]">
                    <p>13:28</p><p>2022/12/11</p>
                    <span className="absolute right-2 top-0 size-[10px] rounded-full bg-[#f00808] text-[8px] leading-[10px]">1</span>
                </div>
                <button aria-label="显示桌面" className="w-[14px] h-[38px] border border-[#6c7a88] bg-linear-to-br from-[#6c7a88] to-[#20262c]" />
            </div>
        </nav>
    );
}

function Watermark() {
    return (
        <svg className="absolute inset-0 w-full h-full pointer-events-none">
            {[0, 1, 2, 3, 4].map((r) => [0, 1, 2, 3, 4, 5, 6, 7].map((c) => (
                <text key={`${r}-${c}`} transform={`translate(${61 + c * 250} ${179 + r * 250}) rotate(-34)`} className="text-[35px] font-['DejaVu_Sans',sans-serif]" fill="#fff" fillOpacity=".06" stroke="#808080" strokeOpacity=".3">eahub.cn</text>
            )))}
        </svg>
    );
}

export default function App() {
    return (
        <div className="relative h-screen flex flex-col overflow-hidden bg-[#f0f0f0] text-black font-['Noto_Sans','Noto_Sans_CJK_SC',sans-serif]">
            <TitleBar />
            <div className="flex-1 min-h-0 flex">
                <div className="w-2 shrink-0 border-l-2 border-r border-l-[#3c4654] border-r-[#5a6a78] bg-linear-to-b from-[#cfdcea] via-[#dfe8f2] via-25% to-[#8fb0d8]" />
                <div className="flex-1 min-w-0 flex flex-col">
                    <MenuBar />
                    <div className="shrink-0 flex">
                        <div className="flex-1 min-w-0"><MainToolbar /><LineToolbar /></div>
                        <div className="h-[54px] w-[50px] shrink-0 flex gap-[14px] pt-[6px] border-b-2 border-[#8c8c8c] overflow-hidden">
                            <button aria-label="搜索" className="ml-1 h-4"><Svg className="size-4" box="0 0 16 16"><circle cx="10" cy="5.500" r="4" stroke="#3c6cd0" strokeWidth="1.800" /><path d="M7 9l-5 5" stroke="#3c6cd0" strokeWidth="3" /></Svg></button>
                            <button aria-label="消息" className="h-5 shrink-0"><Svg className="w-6 h-5" box="0 0 24 20"><ellipse cx="8" cy="11" rx="7" ry="5.500" fill="#d8d8de" stroke="#a0a0a8" /><path d="M4 15l-1 4 5-3z" fill="#d8d8de" /><circle cx="13" cy="7" r="7" fill="#e03420" /><path d="M11 5l2-1.500V11" stroke="#fff" strokeWidth="1.600" /></Svg></button>
                        </div>
                    </div>
                    <main className="flex-1 min-h-0 flex">
                        <div className="w-[99px] shrink-0 flex flex-col border-r border-[#8c8c8c]">
                            <MarketWatch />
                            <Navigator />
                        </div>
                        <div className="flex-1 min-w-0 flex flex-col">
                            <Chart />
                            <ChartTabs />
                        </div>
                    </main>
                    <section className="h-[26px] shrink-0 flex mt-[2px]">
                        <button aria-label="关闭终端" className="w-[15px] shrink-0 self-start mt-[2px] font-bold text-sm leading-3">×</button>
                        <div className="flex-1 h-[22px] bg-white border-t border-l border-[#8c8c8c] flex items-center gap-[6px] pl-[5px] text-xs">
                            <i className="size-[7px] rounded-full bg-[#b0b0b0] border border-[#777]" />
                            <p className="flex gap-[11px] whitespace-nowrap"><span>余额: 1 235.70 USD</span><span>盈/亏: 0.00</span><span>净值: 1 235.70</span><span>可用预付款: 1 235.70</span></p>
                        </div>
                    </section>
                    <Tester />
                    <StatusBar />
                </div>
            </div>
            <Taskbar />
            <Watermark />
            <SpeedBall />
        </div>
    );
}
